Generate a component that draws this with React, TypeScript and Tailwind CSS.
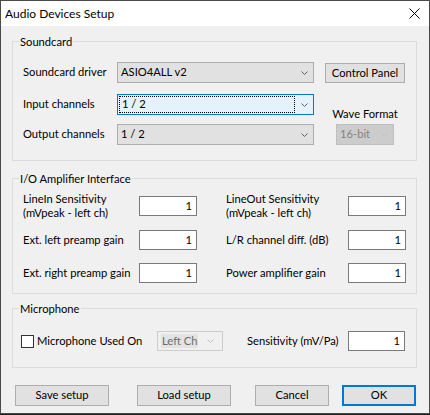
import type { ReactNode } from 'react';

function Chevron({ color = '#606060' }: { color?: string }) {
  return (
    <svg width="7" height="4" viewBox="0 0 7 4" className="flex-none">
      <path d="M0.5 0.5 L3.5 3.5 L6.5 0.5" fill="none" stroke={color} strokeWidth="1" />
    </svg>
  );
}

function Combo({ value, focused }: { value: string; focused?: boolean }) {
  if (focused) {
    return (
      <div className="flex h-[21px] w-[197px] items-center border border-[#0078d7] bg-[#e5f1fb]">
        <span className="ml-[1px] flex h-[17px] flex-1 items-center border border-dotted border-black pl-[2px]">{value}</span>
        <span className="flex w-[18px] justify-center"><Chevron /></span>
      </div>
    );
  }
  return (
    <div className="flex h-[21px] w-[197px] items-center border border-[#adadad] bg-[#e1e1e1]">
      <span className="flex-1 pl-[3px]">{value}</span>
      <span className="flex w-[18px] justify-center"><Chevron /></span>
    </div>
  );
}

function NumBox({ w = 'w-[58px]' }: { w?: string }) {
  return (
    <div className={`flex h-[20px] flex-none items-center justify-end border border-[#7a7a7a] bg-white pr-[4px] ${w}`}>1</div>
  );
}

function Group({ title, className, children }: { title: string; className?: string; children: ReactNode }) {
  return (
    <div className={`relative border border-[#dcdcdc] ${className ?? ''}`}>
      <span className="absolute left-[6px] top-[-8px] bg-[#f0f0f0] px-[1px] leading-[15px]">{title}</span>
      {children}
    </div>
  );
}

function Btn({ label, w, primary }: { label: string; w: string; primary?: boolean }) {
  return (
    <button
      type="button"
      className={`flex h-[21px] items-center justify-center bg-[#e1e1e1] ${w} ${primary ? 'border-2 border-[#0078d7]' : 'border border-[#adadad]'}`}
    >
      {label}
    </button>
  );
}

export default function App() {
  return (
    <div className="h-[415px] w-[430px] bg-[#1e1e1e] font-['Lato','Liberation_Sans',sans-serif] text-[11.2px] text-black">
      <div className="flex h-[414px] w-[430px] flex-col border border-[#4a4a4a] bg-[#f0f0f0]">
        {/* title bar */}
        <div className="flex h-[25px] flex-none items-center justify-between bg-white pl-[4px] pr-[9px]">
          <span className="text-[12px]">Audio Devices Setup</span>
          <svg width="11" height="11" viewBox="0 0 11 11">
            <path d="M0.5 0.5 L10.5 10.5 M10.5 0.5 L0.5 10.5" stroke="#000" strokeWidth="1" />
          </svg>
        </div>

        <div className="flex flex-col pl-[11px] pr-[12px]">
          {/* Soundcard */}
          <Group title="Soundcard" className="mt-[15px] pb-[15px] pl-[10px] pt-[20px]">
            <div className="flex">
              <div className="flex flex-col">
                <div className="flex h-[21px] items-center">
                  <span className="w-[94px]">Soundcard driver</span>
                  <Combo value="ASIO4ALL v2" />
                </div>
                <div className="mt-[11px] flex h-[21px] items-center">
                  <span className="w-[94px]">Input channels</span>
                  <Combo value="1 / 2" focused />
                </div>
                <div className="mt-[9px] flex h-[21px] items-center">
                  <span className="w-[94px]">Output channels</span>
                  <Combo value="1 / 2" />
                </div>
              </div>
              <div className="ml-[11px] flex w-[80px] flex-col items-center">
                <button type="button" className="mt-[1px] flex h-[20px] w-[80px] items-center justify-center border border-[#adadad] bg-[#e1e1e1]">
                  Control Panel
                </button>
                <span className="mt-[23px] leading-[15px]">Wave Format</span>
                <div className="mt-[3px] flex h-[21px] w-[58px] items-center border border-[#bfbfbf] bg-[#cccccc] text-[#838383]">
                  <span className="flex-1 pl-[3px]">16-bit</span>
                  <span className="flex w-[18px] justify-center"><Chevron color="#bfbfbf" /></span>
                </div>
              </div>
            </div>
          </Group>

          {/* I/O Amplifier Interface */}
          <Group title="I/O Amplifier Interface" className="mt-[17px] pb-[10px] pl-[10px] pt-[17px]">
            <div className="grid grid-cols-[174px_180px] gap-x-[29px]">
              <div className="flex flex-col">
                <div className="flex h-[20px] items-center">
                  <span className="w-[116px] leading-[14px]">LineIn Sensitivity<br />(mVpeak - left ch)</span>
                  <NumBox />
                </div>
                <div className="mt-[14px] flex h-[20px] items-center">
                  <span className="w-[116px]">Ext. left preamp gain</span>
                  <NumBox />
                </div>
                <div className="mt-[13px] flex h-[20px] items-center">
                  <span className="w-[116px]">Ext. right preamp gain</span>
                  <NumBox />
                </div>
              </div>
              <div className="flex flex-col">
                <div className="flex h-[20px] items-center">
                  <span className="w-[122px] leading-[14px]">LineOut Sensitivity<br />(mVpeak - left ch)</span>
                  <NumBox />
                </div>
                <div className="mt-[14px] flex h-[20px] items-center">
                  <span className="w-[122px]">L/R channel diff. (dB)</span>
                  <NumBox />
                </div>
                <div className="mt-[13px] flex h-[20px] items-center">
                  <span className="w-[122px]">Power amplifier gain</span>
                  <NumBox />
                </div>
              </div>
            </div>
          </Group>

          {/* Microphone */}
          <Group title="Microphone" className="mt-[14px] pb-[16px] pl-[8px] pt-[22px]">
            <div className="flex h-[20px] items-center">
              <span className="h-[13px] w-[13px] flex-none border border-[#333333] bg-white" />
              <span className="ml-[3px] w-[120px]">Microphone Used On</span>
              <div className="flex h-[20px] w-[66px] items-center border border-[#cccccc] bg-[#f0f0f0] text-[#6d6d6d]">
                <span className="ml-[3px] flex h-[14px] items-center bg-[#e3e3e3] px-[1px]">Left Ch</span>
                <span className="flex flex-1 justify-center"><Chevron color="#c0c0c0" /></span>
              </div>
              <span className="ml-[24px] w-[101px]">Sensitivity (mV/Pa)</span>
              <NumBox w="w-[57px]" />
            </div>
          </Group>

          {/* buttons */}
          <div className="mt-[17px] flex pl-[3px]">
            <Btn label="Save setup" w="w-[94px]" />
            <div className="ml-[28px]"><Btn label="Load setup" w="w-[94px]" /></div>
            <div className="ml-[24px]"><Btn label="Cancel" w="w-[74px]" /></div>
            <div className="ml-[13px]"><Btn label="OK" w="w-[74px]" primary /></div>
          </div>
        </div>
      </div>
    </div>
  );
}
